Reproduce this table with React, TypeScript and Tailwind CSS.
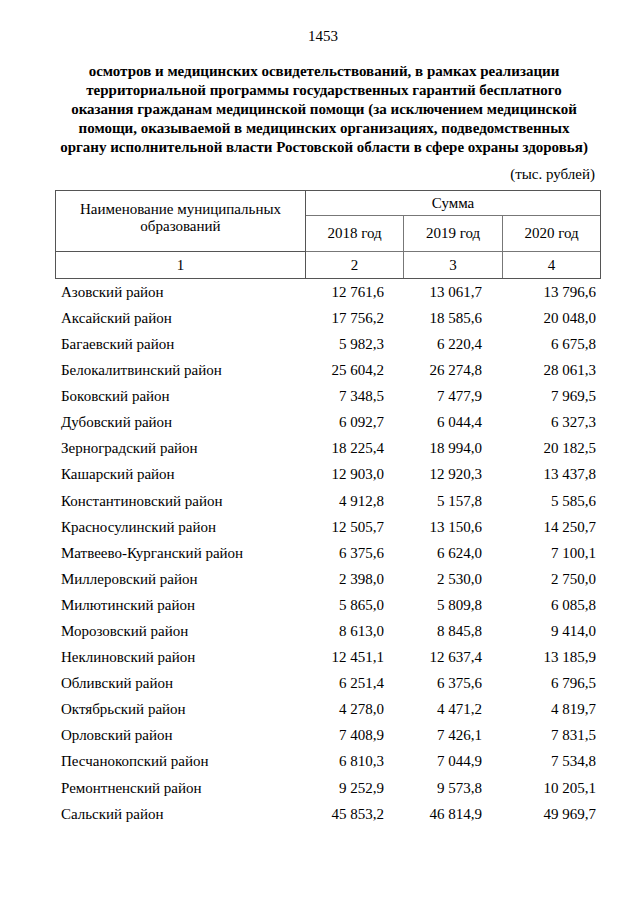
import React from "react";

const T = "\u00A0";
const rows: [string, string, string, string][] = [
  ["Азовский район", `12${T}761,6`, `13${T}061,7`, `13${T}796,6`],
  ["Аксайский район", `17${T}756,2`, `18${T}585,6`, `20${T}048,0`],
  ["Багаевский район", `5${T}982,3`, `6${T}220,4`, `6${T}675,8`],
  ["Белокалитвинский район", `25${T}604,2`, `26${T}274,8`, `28${T}061,3`],
  ["Боковский район", `7${T}348,5`, `7${T}477,9`, `7${T}969,5`],
  ["Дубовский район", `6${T}092,7`, `6${T}044,4`, `6${T}327,3`],
  ["Зерноградский район", `18${T}225,4`, `18${T}994,0`, `20${T}182,5`],
  ["Кашарский район", `12${T}903,0`, `12${T}920,3`, `13${T}437,8`],
  ["Константиновский район", `4${T}912,8`, `5${T}157,8`, `5${T}585,6`],
  ["Красносулинский район", `12${T}505,7`, `13${T}150,6`, `14${T}250,7`],
  ["Матвеево-Курганский район", `6${T}375,6`, `6${T}624,0`, `7${T}100,1`],
  ["Миллеровский район", `2${T}398,0`, `2${T}530,0`, `2${T}750,0`],
  ["Милютинский район", `5${T}865,0`, `5${T}809,8`, `6${T}085,8`],
  ["Морозовский район", `8${T}613,0`, `8${T}845,8`, `9${T}414,0`],
  ["Неклиновский район", `12${T}451,1`, `12${T}637,4`, `13${T}185,9`],
  ["Обливский район", `6${T}251,4`, `6${T}375,6`, `6${T}796,5`],
  ["Октябрьский район", `4${T}278,0`, `4${T}471,2`, `4${T}819,7`],
  ["Орловский район", `7${T}408,9`, `7${T}426,1`, `7${T}831,5`],
  ["Песчанокопский район", `6${T}810,3`, `7${T}044,9`, `7${T}534,8`],
  ["Ремонтненский район", `9${T}252,9`, `9${T}573,8`, `10${T}205,1`],
  ["Сальский район", `45${T}853,2`, `46${T}814,9`, `49${T}969,7`],
];

export default function App() {
  return (
    <div
      className="w-[640px] min-h-[905px] bg-white text-black"
      style={{ fontFamily: '"Liberation Serif", "Times New Roman", serif' }}
    >
      <div className="pt-[27px] pl-[6px] text-center text-[15px] leading-[19px]">1453</div>
      <div className="mt-[16px] pl-[8px] text-center font-bold text-[15px] leading-[19px]">
        <div>осмотров и медицинских освидетельствований, в рамках реализации</div>
        <div>территориальной программы государственных гарантий бесплатного</div>
        <div>оказания гражданам медицинской помощи (за исключением медицинской</div>
        <div>помощи, оказываемой в медицинских организациях, подведомственных</div>
        <div>органу исполнительной власти Ростовской области в сфере охраны здоровья)</div>
      </div>
      <div className="mt-[8px] pr-[45px] text-right text-[15px] leading-[19px]">(тыс. рублей)</div>

      <div className="ml-[55px] mt-[6px] w-[546px] border border-[#555] text-[15px] grid grid-cols-[250px_98px_99px_97px] grid-rows-[25px_36px_26px]">
        <div className="row-span-2 border-r border-b border-[#555] flex items-center justify-center text-center leading-[17px] pb-[6px]">
          <div>
            Наименование муниципальных
            <br />
            образований
          </div>
        </div>
        <div className="col-span-3 border-b border-[#777] flex items-center justify-center">Сумма</div>
        <div className="border-r border-b border-[#777] flex items-center justify-center">2018 год</div>
        <div className="border-r border-b border-[#777] flex items-center justify-center">2019 год</div>
        <div className="border-b border-[#777] flex items-center justify-center">2020 год</div>
        <div className="border-r border-[#555] flex items-center justify-center">1</div>
        <div className="border-r border-[#777] flex items-center justify-center">2</div>
        <div className="border-r border-[#777] flex items-center justify-center">3</div>
        <div className="flex items-center justify-center">4</div>
      </div>

      <div className="ml-[55px] text-[15px]">
        {rows.map((r) => (
          <div key={r[0]} className="grid grid-cols-[250px_79px_98px_114px] h-[26.1px] items-center">
            <div className="pl-[6px]">{r[0]}</div>
            <div className="text-right">{r[1]}</div>
            <div className="text-right">{r[2]}</div>
            <div className="text-right">{r[3]}</div>
          </div>
        ))}
      </div>
    </div>
  );
}
